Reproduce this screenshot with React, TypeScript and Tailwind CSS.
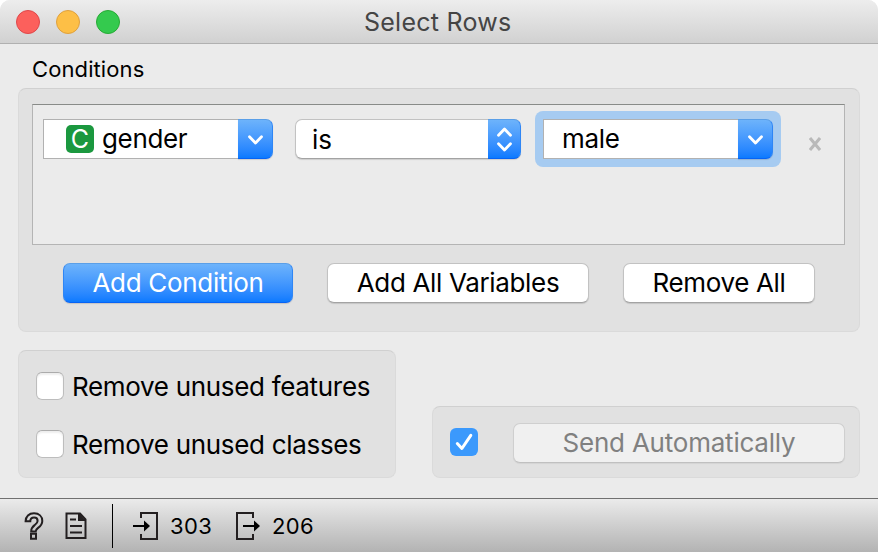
import type { ReactNode } from "react";

const blue = "bg-linear-to-b from-[#6db3fb] to-[#0a7aff]";
const plate =
  "bg-white border border-[#c2c2c2] border-b-[#a3a3a3] shadow-[0_1px_1px_rgba(0,0,0,0.13)] rounded-[7px]";
const panel = "rounded-lg border border-[#dadada] border-t-[#d0d0d0] bg-[#e1e1e1]";

function Chevron() {
  return (
    <svg width="16" height="10" viewBox="0 0 16 10" fill="none" stroke="white" strokeWidth="2.8" strokeLinecap="round" strokeLinejoin="round">
      <path d="M1.5 1.7 7.5 8 13.5 1.7" />
    </svg>
  );
}

function Combo({ children }: { children: ReactNode }) {
  return (
    <div className="flex h-10 w-[230px]">
      <div className="flex flex-1 items-center border border-r-0 border-[#b1b1b1] bg-white">{children}</div>
      <div className={`flex w-[35px] items-center justify-center rounded-r-[7px] border border-l-0 border-t-[#5a9fe8] border-r-[#2f86f5] border-b-[#0763f5] pt-px pl-px shadow-[0_1px_1px_rgba(0,0,0,0.13)] ${blue}`}>
        <Chevron />
      </div>
    </div>
  );
}

function CheckRow({ label }: { label: string }) {
  return (
    <div className="flex h-7 items-center">
      <div className="h-7 w-7 rounded-md border border-[#bdbdbd] border-t-[#ababab] bg-white shadow-[inset_0_2px_2px_rgba(0,0,0,0.07)]" />
      <span className="ml-2 pt-0.5 text-[26px] leading-7 tracking-[-0.32px]">{label}</span>
    </div>
  );
}

export default function App() {
  return (
    <div className="flex h-[552px] w-[878px] flex-col overflow-hidden rounded-t-[10px] bg-[#ebebeb] font-['Inter','Liberation_Sans',sans-serif] whitespace-nowrap text-black">
      <header className="flex h-11 shrink-0 items-center border-b border-[#b0b0b0] bg-linear-to-b from-[#ededed] to-[#d1d1d1] pl-4">
        <div className="flex w-[348px] gap-4">
          <span className="h-6 w-6 rounded-full border border-[#df474a] bg-[#fc605c]" />
          <span className="h-6 w-6 rounded-full border border-[#dfa03d] bg-[#fdbf46]" />
          <span className="h-6 w-6 rounded-full border border-[#27aa35] bg-[#34ca4e]" />
        </div>
        <h1 className="pt-[3px] text-[25px] tracking-[0.25px] text-[#454545]">Select Rows</h1>
      </header>

      <main className="flex h-[454px] shrink-0 flex-col px-[18px]">
        <h2 className="h-11 pt-[11px] pl-3.5 text-[22px] leading-7 tracking-[0.1px]">Conditions</h2>
        <section className={`h-[244px] shrink-0 px-[13px] pt-[15px] ${panel}`}>
          <div className="flex h-[141px] w-[813px] items-start border border-[#b4b4b4] border-t-[#888b88] bg-[#ebebeb] pt-3.5 pl-2.5">
            <Combo>
              <span className="ml-[22px] flex h-7 w-7 items-center justify-center rounded-[5px] bg-[#1b983f] text-[25px] leading-none text-white">C</span>
              <span className="ml-2 text-[26px] leading-8 tracking-[-0.35px]">gender</span>
            </Combo>
            <div className={`ml-[22px] flex h-10 w-[226px] ${plate} border-r-0`}>
              <span className="flex flex-1 items-center pl-4 text-[26px]">is</span>
              <div className={`-my-px flex w-[33px] flex-col items-center justify-center gap-[5px] rounded-r-[7px] border border-l-0 border-t-[#5a9fe8] border-r-[#2f86f5] border-b-[#0763f5] pl-px ${blue}`}>
                <span className="flex -scale-y-100"><Chevron /></span>
                <Chevron />
              </div>
            </div>
            <div className="-mt-2 ml-3.5 rounded-lg bg-[#a6cbf1] p-2">
              <Combo>
                <span className="ml-[18px] text-[26px] leading-8 tracking-[-0.3px]">male</span>
              </Combo>
            </div>
            <svg className="mt-[18px] ml-7" width="12" height="14" viewBox="0 0 12 14" stroke="#b9b9b9" strokeWidth="3">
              <path d="M1 1 11 13M11 1 1 13" />
            </svg>
          </div>
          <div className="mt-[18px] flex pl-[31px] text-[26px] leading-[38px]">
            <button className={`h-10 w-[230px] rounded-[7px] border border-t-[#5a9fe8] border-x-[#2f86f5] border-b-[#0763f5] tracking-[-0.3px] text-white shadow-[0_1px_1px_rgba(0,0,0,0.13)] ${blue}`}>Add Condition</button>
            <button className={`ml-[34px] h-10 w-[262px] tracking-[-0.34px] ${plate}`}>Add All Variables</button>
            <button className={`ml-[34px] h-10 w-48 tracking-[-0.36px] ${plate}`}>Remove All</button>
          </div>
        </section>

        <div className="mt-[18px] flex items-end justify-between">
          <section className={`flex h-32 w-[378px] flex-col gap-[30px] pt-[21px] pl-[17px] ${panel}`}>
            <CheckRow label="Remove unused features" />
            <CheckRow label="Remove unused classes" />
          </section>
          <section className={`flex h-[72px] w-[428px] items-start pt-4 pl-[17px] ${panel}`}>
            <span className="mt-[5px] flex h-7 w-7 items-center justify-center rounded-md bg-[#3b99fc]">
              <svg width="28" height="28" viewBox="0 0 28 28" fill="none" stroke="white" strokeWidth="3" strokeLinecap="round" strokeLinejoin="round">
                <path d="M7.3 15.5 11.9 20.5 20.8 7.3" />
              </svg>
            </span>
            <button className="ml-[35px] h-10 w-[332px] rounded-[7px] border border-[#cfcfcf] border-b-[#c0c0c0] bg-[#f0f0f0] text-[26px] leading-[38px] tracking-[-0.22px] text-[#808080] shadow-[0_1px_1px_rgba(0,0,0,0.06)]">Send Automatically</button>
          </section>
        </div>
      </main>

      <footer className="flex h-[54px] shrink-0 items-center border-t border-[#707070] bg-linear-to-b from-[#ebebeb] to-[#b3b3b3] pl-6 text-[22px]">
        <svg width="20" height="28" viewBox="0 0 20 28" fill="none" stroke="#231f20" strokeWidth="2">
          <path d="M1.6 9.3C1.6 4.4 5 1.3 10 1.3s8.3 3.1 8.3 7.6c0 3.7-2 5.3-4.2 7-1.6 1.2-2.4 2-2.4 3.5H7.2c0-3.2 1.2-4.6 3.4-6.3 1.9-1.5 3-2.3 3-4.2 0-2-1.3-3.3-3.5-3.3-2.4 0-3.8 1.5-3.8 3.7Z" />
          <path d="M7 21.8h5v5H7z" />
        </svg>
        <svg className="ml-[21px]" width="22" height="28" viewBox="0 0 22 28" fill="none" stroke="#231f20" strokeWidth="2">
          <path d="M1.5 1.5H15l5.5 6V26H1.5Z" />
          <path d="M14 2v6h6.5" />
          <path d="M15 2 20 8h-5Z" fill="#231f20" stroke="none" />
          <path d="M5 7.5h6M5 14h12M5 20.5h12" />
        </svg>
        <div className="ml-[25px] h-11 w-px bg-black" />
        <svg className="ml-5" width="26" height="28" viewBox="0 0 26 28" fill="none" stroke="#231f20" strokeWidth="2">
          <path d="M8 6V1h16v26H8v-5" />
          <path d="M0 14h12" stroke="black" />
          <path d="M11 8.5 17 14l-6 5.5Z" fill="black" stroke="none" />
        </svg>
        <span className="ml-[11px] w-[43px] pt-0.5 tracking-[0.4px]">303</span>
        <svg className="ml-[23px]" width="25" height="28" viewBox="0 0 25 28" fill="none" stroke="#231f20" strokeWidth="2">
          <path d="M17 6V1H1v26h16v-5" />
          <path d="M7 14h12" stroke="black" />
          <path d="M18 8.5 24 14l-6 5.5Z" fill="black" stroke="none" />
        </svg>
        <span className="ml-[11px] pt-0.5 tracking-[0.4px]">206</span>
      </footer>
    </div>
  );
}
